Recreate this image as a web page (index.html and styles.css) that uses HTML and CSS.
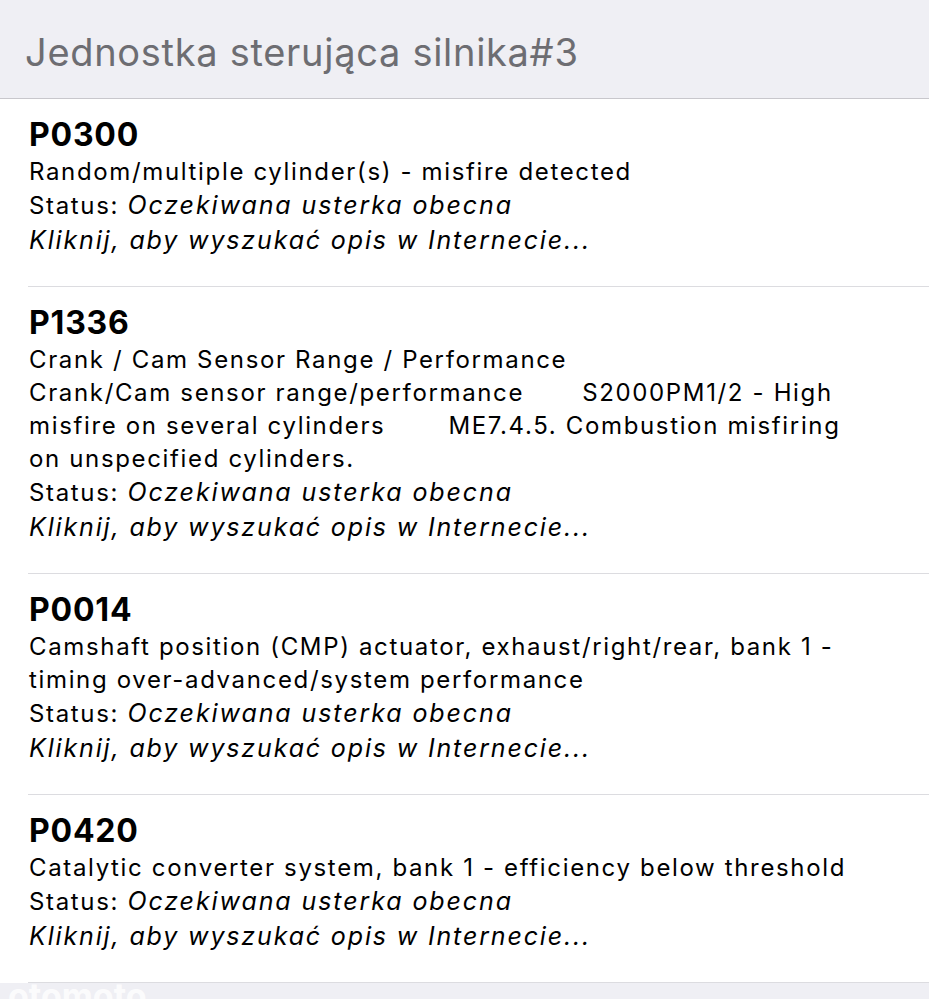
FILE: index.html
```html
<!DOCTYPE html>
<html lang="pl">
<head>
<meta charset="utf-8">
<title>Jednostka sterująca silnika#3</title>
<link rel="stylesheet" href="styles.css">
</head>
<body>
<div class="screen">
  <header class="header">
    <h1 class="header-title">Jednostka sterująca silnika#3</h1>
  </header>
  <ul class="list">
    <li class="item">
      <div class="code">P0300</div>
      <div class="desc">Random/multiple cylinder(s) - misfire detected</div>
      <div class="status">Status: <em>Oczekiwana usterka obecna</em></div>
      <div class="link">Kliknij, aby wyszukać opis w Internecie...</div>
    </li>
    <li class="item">
      <div class="code">P1336</div>
      <div class="desc">Crank / Cam Sensor Range / Performance<br>Crank/Cam sensor range/performance<span class="gap g1"></span>S2000PM1/2 - High<br>misfire on several cylinders<span class="gap g2"></span>ME7.4.5. Combustion misfiring<br>on unspecified cylinders.</div>
      <div class="status">Status: <em>Oczekiwana usterka obecna</em></div>
      <div class="link">Kliknij, aby wyszukać opis w Internecie...</div>
    </li>
    <li class="item">
      <div class="code">P0014</div>
      <div class="desc">Camshaft position (CMP) actuator, exhaust/right/rear, bank 1 -<br>timing over-advanced/system performance</div>
      <div class="status">Status: <em>Oczekiwana usterka obecna</em></div>
      <div class="link">Kliknij, aby wyszukać opis w Internecie...</div>
    </li>
    <li class="item">
      <div class="code">P0420</div>
      <div class="desc">Catalytic converter system, bank 1 - efficiency below threshold</div>
      <div class="status">Status: <em>Oczekiwana usterka obecna</em></div>
      <div class="link">Kliknij, aby wyszukać opis w Internecie...</div>
    </li>
  </ul>
  <footer class="footer"><span class="watermark">otomoto</span></footer>
</div>
</body>
</html>
```

FILE: styles.css
```css
* { box-sizing: border-box; }
html, body { margin: 0; padding: 0; background: #ffffff; }
body {
  font-family: Inter, "Noto Sans", "Liberation Sans", sans-serif;
  color: #000;
}
.screen {
  width: 929px;
  height: 999px;
  overflow: hidden;
  display: flex;
  flex-direction: column;
}
.header {
  height: 99px;
  background: #efeff4;
  border-bottom: 1px solid #c8c7cc;
  padding: 25px 0 0 25px;
  flex: none;
}
.header-title {
  margin: 0;
  font-size: 38px;
  font-weight: 400;
  line-height: 54px;
  color: #6d6d72;
  letter-spacing: 0.7px;
}
.list {
  list-style: none;
  margin: 0;
  padding: 0 0 0 28px;
  flex: none;
}
.item {
  padding: 16px 0 28px 1px;
  border-bottom: 1px solid #dcdce0;
}
.code {
  font-size: 32px;
  font-weight: 700;
  line-height: 40px;
  letter-spacing: 0.8px;
}
.desc {
  font-size: 24px;
  line-height: 33px;
  white-space: nowrap;
  letter-spacing: 1.65px;
}
.status, .link {
  font-size: 24px;
  line-height: 35px;
  letter-spacing: 1.65px;
}
.status em { font-style: italic; font-size: 25px; letter-spacing: 1.9px; }
.link { font-style: italic; font-size: 25px; letter-spacing: 1.85px; }
.gap { display: inline-block; }
.g1 { width: 58px; }
.g2 { width: 63px; }
.footer {
  flex: 1;
  background: #efeff4;
  position: relative;
  overflow: hidden;
}
.watermark {
  position: absolute;
  left: 8px;
  top: -4px;
  font-size: 34px;
  font-weight: 700;
  color: rgba(255,255,255,0.8);
  line-height: 34px;
}
```
